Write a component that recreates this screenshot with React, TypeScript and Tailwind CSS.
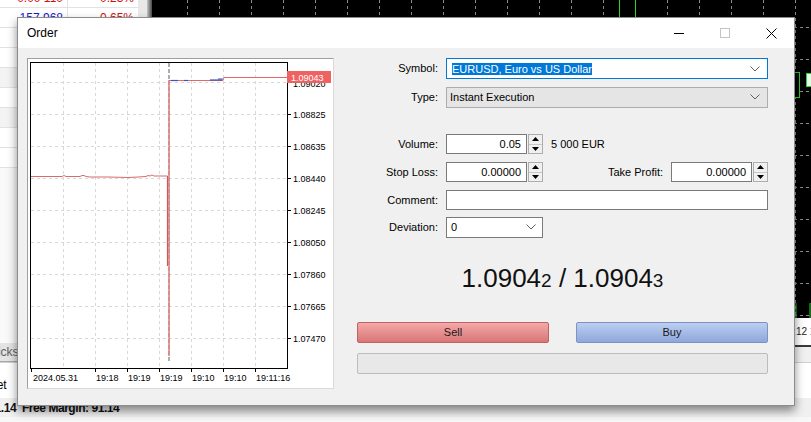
import React from "react";

const Chevron = () => (
  <svg width="10" height="6" viewBox="0 0 10 6" className="block">
    <path d="M0.5 0.5 L5 5 L9.5 0.5" fill="none" stroke="#606060" strokeWidth="1" />
  </svg>
);

const Spinner = () => (
  <div className="ml-[1px] w-[15px] h-[20px] border border-[#adadad] bg-[#f0f0f0] flex flex-col">
    <div className="flex-1 flex items-center justify-center border-b border-[#c8c8c8]">
      <svg width="7" height="4" viewBox="0 0 7 4"><path d="M0 4 L3.5 0 L7 4 Z" fill="#000" /></svg>
    </div>
    <div className="flex-1 flex items-center justify-center">
      <svg width="7" height="4" viewBox="0 0 7 4"><path d="M0 0 L3.5 4 L7 0 Z" fill="#000" /></svg>
    </div>
  </div>
);

const NumInput = ({ v }: { v: string }) => (
  <div className="w-[81px] h-[20px] border border-[#7a7a7a] bg-white flex items-center justify-end pr-[5px]">{v}</div>
);

const Label = ({ children }: { children: React.ReactNode }) => (
  <div className="w-[81px] text-right mr-[8px] shrink-0">{children}</div>
);

const Chart = () => {
  const hy = [23, 55, 87, 119, 151, 183, 215, 247, 279];
  const labels = ["1.09020", "1.08825", "1.08635", "1.08440", "1.08245", "1.08050", "1.07860", "1.07665", "1.07470"];
  const vx = [35, 67, 99, 131, 163, 195, 227];
  const xl: [number, number, string][] = [
    [3, 4, "2024.05.31"],
    [67, 67, "19:18"],
    [99, 99, "19:19"],
    [131, 131, "19:19"],
    [163, 163, "19:10"],
    [195, 195, "19:10"],
    [227, 227, "19:11:16"],
  ];
  return (
    <svg width="305" height="329" viewBox="0 0 305 329" className="block text-[9px]">
      <rect x="0" y="0" width="305" height="329" fill="#fff" />
      {hy.map((y) => (
        <line key={"h" + y} x1="3" x2="259" y1={y + 0.5} y2={y + 0.5} stroke="#d9d9d9" strokeDasharray="3 3" />
      ))}
      {vx.map((x) => (
        <line key={"v" + x} x1={x + 0.5} x2={x + 0.5} y1="4" y2="309" stroke="#d9d9d9" strokeDasharray="3 3" />
      ))}
      <rect x="2.5" y="3.5" width="257" height="306" fill="none" stroke="#000" />
      {hy.map((y, i) => (
        <g key={"l" + y}>
          <line x1="260" x2="263" y1={y + 0.5} y2={y + 0.5} stroke="#000" />
          <text x="265" y={y + (i === 0 ? 5 : 3.5)} fill="#000">{labels[i]}</text>
        </g>
      ))}
      {xl.map(([tx, lx, t], i) => (
        <g key={"x" + i}>
          <line x1={tx + 0.5} x2={tx + 0.5} y1="310" y2="313" stroke="#000" />
          <text x={lx + 1} y="322" fill="#000">{t}</text>
        </g>
      ))}
      <line x1="141" x2="141" y1="4" y2="304" stroke="#999" strokeWidth="1.6" strokeDasharray="4 2" />
      <polyline
        points="3,117.5 34,117.5 36,116.5 38,117.5 52,117.5 54,116.5 56,116.5 58,117.5 62,118 80,118 100,118.5 110,118 118,117.5 120,116.5 122,117 124,116 126,117 139.5,117"
        fill="none"
        stroke="#d86b6b"
        strokeWidth="1"
      />
      <line x1="139.5" x2="139.5" y1="117" y2="207" stroke="#c85a5a" strokeWidth="1.2" />
      <line x1="141" x2="141" y1="21" y2="297" stroke="#e18585" strokeWidth="1.6" />
      <polyline points="141,21.5 195,21.5 196,18.5 259,18.5" fill="none" stroke="#d86b6b" strokeWidth="1" />
      <line x1="143" x2="150" y1="21.5" y2="21.5" stroke="#4050c0" strokeWidth="1.2" />
      <line x1="156" x2="160" y1="21.5" y2="21.5" stroke="#4050c0" strokeWidth="1.2" />
      <line x1="182" x2="194" y1="21" y2="21" stroke="#4050c0" strokeWidth="1.2" />
      <line x1="190" x2="195" y1="20" y2="20" stroke="#4050c0" strokeWidth="1" />
      <rect x="259" y="12" width="44" height="12" fill="#ef6262" />
      <text x="263" y="21.5" fill="#fff">1.09043</text>
    </svg>
  );
};

const BlackChart = () => {
  const vx = Array.from({ length: 20 }, (_, k) => 35 + 32 * k);
  const hy = Array.from({ length: 10 }, (_, k) => 27 + 32 * k);
  return (
    <svg width="659" height="318" viewBox="0 0 659 318" className="block">
      <rect width="659" height="318" fill="#000" />
      {vx.map((x) => (
        <line key={x} x1={x + 0.5} x2={x + 0.5} y1="0" y2="318" stroke="#8a8a8a" strokeDasharray="3 3" />
      ))}
      {hy.map((y) => (
        <line key={y} x1="0" x2="659" y1={y + 0.5} y2={y + 0.5} stroke="#8a8a8a" strokeDasharray="3 3" />
      ))}
      <rect x="467.5" y="-5" width="16" height="40" fill="#000" stroke="#2bd42b" />
      <rect x="630.5" y="72.5" width="17" height="25" fill="#000" stroke="#2bd42b" />
      <rect x="654.5" y="73.5" width="10" height="13" fill="#e9f9e9" stroke="#2bd42b" />
      <line x1="644" x2="644" y1="303" y2="318" stroke="#2bd42b" />
      <line x1="658" x2="658" y1="303" y2="318" stroke="#2bd42b" />
    </svg>
  );
};

export default function App() {
  const rows: [string, string, string, string][] = [
    ["0.00 110", "text-[#d01010]", "0.23%", "text-[#d01010]"],
    ["157.968", "text-[#1a1ad0]", "-0.65%", "text-[#d01010]"],
    ["", "", "", ""],
    ["", "", "", ""],
    ["", "", "", ""],
    ["", "", "", ""],
    ["", "", "", ""],
    ["", "", "", ""],
    ["", "", "", ""],
  ];
  return (
    <div className="relative w-[811px] h-[422px] overflow-hidden bg-[#f4f4f4] font-['Liberation_Sans',Arial,sans-serif] text-[11px] text-black">
      {/* background terminal */}
      <div className="flex flex-col h-full">
        <div className="flex h-[362px]">
          <div className="w-[152px] flex">
            <div className="w-[138px] flex flex-col">
              <div className="-mt-[12px] bg-white flex flex-col">
                {rows.map((r, i) => (
                  <div key={i} className={`flex h-[20px] border-b border-[#e2e2e2] ${i === 4 || i === 6 ? "bg-[#f3f3f3]" : ""}`}>
                    <div className={`w-[68px] border-r border-[#e2e2e2] flex items-center justify-end pr-[4px] text-[12px] ${r[1]}`}>{r[0]}</div>
                    <div className={`flex-1 flex items-center justify-end pr-[4px] text-[12px] ${r[3]}`}>{r[2]}</div>
                  </div>
                ))}
              </div>
              <div className="flex-1 bg-gradient-to-r from-[#fafafa] to-[#e4e4e4]" />
              <div className="h-[19px] flex bg-[#f4f4f4] border-b border-[#a8a8a8]">
                <div className="pl-[0px] -ml-[9px] pr-[6px] bg-[#e4e4e4] border-r border-[#b8b8b8] flex items-center text-[#606060] text-[12px]">Ticks</div>
              </div>
            </div>
            <div className="w-[9px] bg-[#e8e8e8]" />
            <div className="w-[5px] bg-gradient-to-r from-[#c8c8c8] to-[#4a4a4a]" />
          </div>
          <div className="flex-1 flex flex-col">
            <BlackChart />
            <div className="h-[27px] bg-white flex items-center overflow-hidden">
              <span className="ml-[630px] text-[10px] text-[#222] whitespace-nowrap">19:12 19:13</span>
            </div>
            <div className="h-[2px] bg-[#3a3a3a]" />
            <div className="flex-1 bg-[#f0f0f0]" />
          </div>
        </div>
        <div className="h-[36px] bg-white flex items-center border-t border-[#d0d0d0]">
          <span className="-ml-[30px] text-[12px] pt-[8px]">Market</span>
        </div>
        <div className="h-[19px] bg-[#f0f0f0] flex items-center">
          <span className="-ml-[52px] font-bold text-[12px] tracking-[-0.45px] whitespace-nowrap text-[#111]">
            Equity: 91.14&nbsp;&nbsp;Free Margin: 91.14
          </span>
        </div>
        <div className="flex-1 bg-[#f7f7f7]" />
      </div>

      {/* Order dialog */}
      <div className="absolute left-[17px] top-[17px] w-[778px] h-[389px] border border-[#8c8c8c] bg-[#f0f0f0] flex flex-col shadow-[0_5px_9px_rgba(0,0,0,0.45)]">
        <div className="h-[30px] bg-white flex items-center">
          <div className="pl-[9px] text-[12px] flex-1">Order</div>
          <div className="w-[46px] h-full flex items-center justify-center">
            <svg width="10" height="10" viewBox="0 0 10 10"><line x1="0" x2="10" y1="5.5" y2="5.5" stroke="#000" /></svg>
          </div>
          <div className="w-[46px] h-full flex items-center justify-center">
            <svg width="10" height="10" viewBox="0 0 10 10"><rect x="0.5" y="0.5" width="9" height="9" fill="none" stroke="#c4c4c4" /></svg>
          </div>
          <div className="w-[46px] h-full flex items-center justify-center">
            <svg width="11" height="11" viewBox="0 0 11 11"><path d="M0.5 0.5 L10.5 10.5 M10.5 0.5 L0.5 10.5" stroke="#000" strokeWidth="1" /></svg>
          </div>
        </div>
        <div className="flex-1 flex pl-[9px] pt-[10px]">
          <div className="w-[307px] h-[331px] border border-t-[#a0a0a0] border-l-[#a0a0a0] border-r-[#dadada] border-b-[#dadada] bg-white">
            <Chart />
          </div>
          <div className="ml-[23px] w-[411px] flex flex-col">
            <div className="flex items-center h-[21px]">
              <Label>Symbol:</Label>
              <div className="w-[322px] h-[21px] border border-[#0078d7] bg-white flex items-center pl-[5px] pr-[7px]">
                <span className="bg-[#0078d7] text-white leading-[12px] px-[0px]">EURUSD, Euro vs US Dollar</span>
                <div className="flex-1" />
                <Chevron />
              </div>
            </div>
            <div className="flex items-center h-[20px] mt-[8px]">
              <Label>Type:</Label>
              <div className="w-[322px] h-[21px] border border-[#adadad] bg-[#e5e5e5] flex items-center pl-[3px] pr-[7px]">
                <span>Instant Execution</span>
                <div className="flex-1" />
                <Chevron />
              </div>
            </div>
            <div className="flex items-center h-[20px] mt-[27px]">
              <Label>Volume:</Label>
              <NumInput v="0.05" />
              <Spinner />
              <span className="ml-[8px]">5 000 EUR</span>
            </div>
            <div className="flex items-center h-[20px] mt-[8px]">
              <Label>Stop Loss:</Label>
              <NumInput v="0.00000" />
              <Spinner />
              <div className="flex-1 text-right mr-[8px]">Take Profit:</div>
              <NumInput v="0.00000" />
              <Spinner />
            </div>
            <div className="flex items-center h-[20px] mt-[8px]">
              <Label>Comment:</Label>
              <div className="w-[322px] h-[20px] border border-[#7a7a7a] bg-white" />
            </div>
            <div className="flex items-center h-[20px] mt-[7px]">
              <Label>Deviation:</Label>
              <div className="w-[97px] h-[21px] border border-[#7a7a7a] bg-white flex items-center pl-[4px] pr-[6px]">
                <span>0</span>
                <div className="flex-1" />
                <Chevron />
              </div>
            </div>
            <div className="mt-[28px] h-[26px] text-center text-[26px] leading-[26px] text-[#111] whitespace-nowrap">
              1.0904<span className="text-[19px]">2</span> / 1.0904<span className="text-[19px]">3</span>
            </div>
            <div className="mt-[31px] flex justify-between">
              <div className="w-[192px] h-[21px] rounded-[2px] border border-[#c06262] bg-gradient-to-b from-[#f5a8a8] to-[#d87676] flex items-center justify-center text-[#1a1a1a]">Sell</div>
              <div className="w-[192px] h-[21px] rounded-[2px] border border-[#7d93c4] bg-gradient-to-b from-[#bccff2] to-[#8fa7da] flex items-center justify-center text-[#1a1a1a]">Buy</div>
            </div>
            <div className="mt-[10px] h-[21px] rounded-[2px] border border-[#bcbcbc] bg-[#e8e8e8]" />
          </div>
        </div>
      </div>
    </div>
  );
}
